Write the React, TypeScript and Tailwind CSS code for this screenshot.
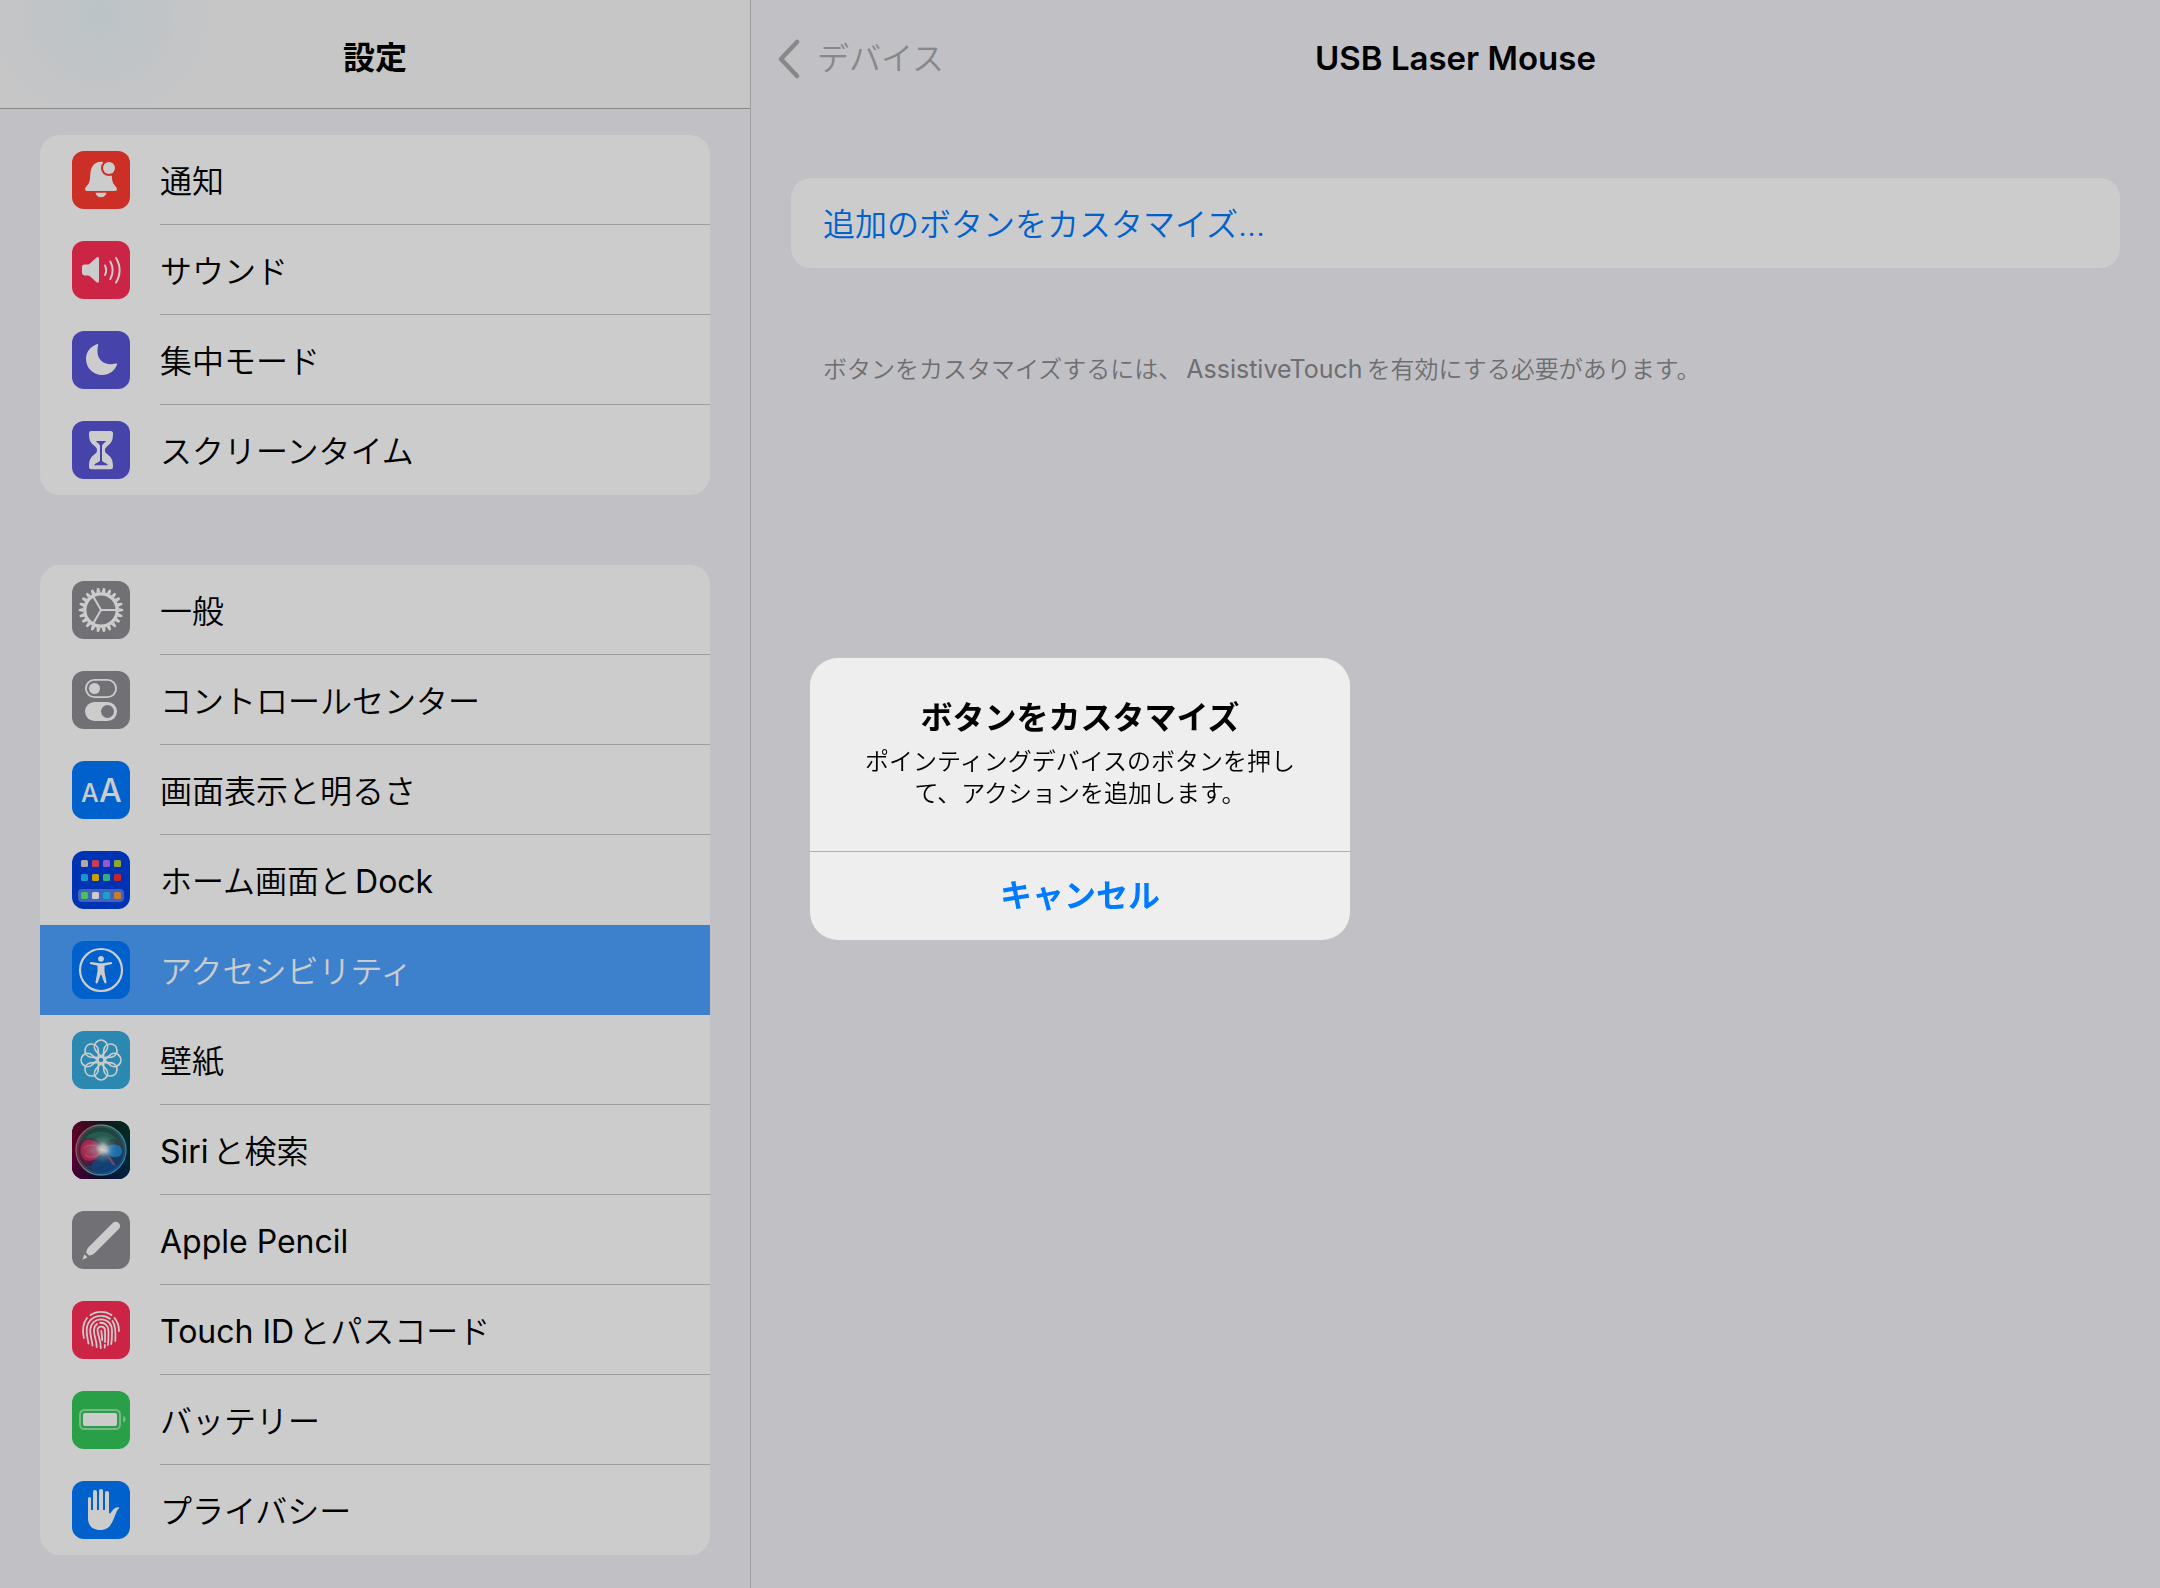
import type { ReactNode } from "react";

const FONT = "font-['Inter','Noto_Sans_CJK_JP',sans-serif]";

function Tile({ bg, children }: { bg: string; children: ReactNode }) {
  return (
    <svg viewBox="0 0 58 58" aria-hidden="true" className={`size-[58px] shrink-0 rounded-xl ${bg}`}>
      {children}
    </svg>
  );
}

function BellIcon() {
  return (
    <Tile bg="bg-[#ff3b30]">
      <path
        fill="#fff"
        d="M13 38c0-1 .8-2 2-3.300C17.500 32 18 29.500 18.200 25 18.500 17 21 11 29 10.700 37 11 39.500 17 39.800 25 40 29.500 40.500 32 43 34.700c1.200 1.300 2 2.300 2 3.300a2 2 0 0 1-2 2H15a2 2 0 0 1-2-2z"
      />
      <path fill="#fff" d="M23.500 41.700h11c-.5 2.800-2.700 4.600-5.500 4.600s-5-1.800-5.500-4.600z" />
      <circle cx="37" cy="17" r="8" fill="#ff3b30" />
      <circle cx="37" cy="17" r="6" fill="#fff" />
    </Tile>
  );
}

function SpeakerIcon() {
  return (
    <Tile bg="bg-[#ff2d55]">
      <path
        fill="#fff"
        d="M10 26q0-2.500 2.500-2.500h3.700q.8 0 1.500-.7l6.500-6q2.800-2 2.800 1V40q0 3-2.800 1l-6.500-6q-.7-.6-1.500-.6h-3.700Q10 34.400 10 32z"
      />
      <g fill="none" stroke="#fff" strokeWidth="2" strokeLinecap="round">
        <path d="M33 24.500c1.500 3 1.500 6.500 0 9.500" />
        <path d="M38.300 20.500c3 5.500 3 12 0 17.500" />
        <path d="M44 17c4.800 7.500 4.800 17 0 24.500" />
      </g>
    </Tile>
  );
}

function MoonIcon() {
  return (
    <Tile bg="bg-[#5856d6]">
      <path
        fill="#fff"
        d="M25 13.200c1-.4 1.400.2 1.100 1.300-1.400 5.500-.6 11.500 2.900 15 3.500 3.500 9 4.600 14.500 3.100 1.500-.5 1.900.2 1.500 1.200C42.500 40 37 44 30.500 44 21 44 14 37 14 27.800 14 21 18.500 15.300 25 13.200z"
      />
    </Tile>
  );
}

function HourglassIcon() {
  return (
    <Tile bg="bg-[#5856d6]">
      <path
        fill="#fff"
        d="M19.500 10h19q2.500 0 2.500 2.500C41 20 39 22 36 24.500c-2.500 2.100-3 3-3 4.700s.5 2.600 3 4.600c3 2.400 5 4.700 5 12q0 2.500-2.500 2.500h-19Q17 48.300 17 45.800c0-7.300 2-9.600 5-12 2.500-2 3-2.900 3-4.600s-.5-2.600-3-4.700C19 22 17 20 17 12.500 17 10 19.500 10 19.500 10z"
      />
      <path
        fill="#5856d6"
        d="M24 20h10c-.8 1.500-3.800 3-4 4.800V39.500c.5 2 5 2.300 6 4.800H22c1-2.500 5.500-2.800 6-4.800V24.800C27.800 23 24.800 21.500 24 20z"
      />
    </Tile>
  );
}

function GearIcon() {
  const teeth = Array.from({ length: 22 }, (_, i) => (i * 360) / 22);
  return (
    <Tile bg="bg-[#8e8e93]">
      {teeth.map((a) => (
        <path key={a} fill="#fff" d="M46.500 27l4.500.9q.6 1.100 0 2.200l-4.500.9z" transform={`rotate(${a} 29 29)`} />
      ))}
      <circle cx="29" cy="29" r="16.200" fill="none" stroke="#fff" strokeWidth="3.200" />
      {[0, 120, 240].map((a) => (
        <path key={a} d="M29 29H44" stroke="#fff" strokeWidth="2" transform={`rotate(${a} 29 29)`} />
      ))}
    </Tile>
  );
}

function TogglesIcon() {
  return (
    <Tile bg="bg-[#8e8e93]">
      <rect x="13.900" y="8.900" width="30.200" height="17.200" rx="8.600" fill="none" stroke="#fff" strokeWidth="1.800" />
      <circle cx="22.500" cy="17.500" r="5.500" fill="#fff" />
      <rect x="13" y="31" width="32" height="19" rx="9.500" fill="#fff" />
      <circle cx="35.500" cy="40.500" r="6.500" fill="#8e8e93" />
    </Tile>
  );
}

function TextSizeIcon() {
  return (
    <Tile bg="bg-[#007aff]">
      <text x="9" y="41" fontSize="25" fontWeight="500" fontFamily="Inter, sans-serif" fill="#fff">
        A
      </text>
      <text x="27" y="41" fontSize="32" fontWeight="500" fontFamily="Inter, sans-serif" fill="#fff">
        A
      </text>
    </Tile>
  );
}

const HOME_APPS = [
  { y: 9, colors: ["#dcd4ce", "#ff4b64", "#bb70ff", "#b5d432"] },
  { y: 23, colors: ["#19c2ff", "#ffc800", "#3edba2", "#fa322c"] },
  { y: 41, colors: ["#57f370", "#ffffff", "#19ceff", "#ff9c3e"] },
];

function HomeScreenIcon() {
  return (
    <Tile bg="bg-[#003fe1]">
      <rect x="6" y="38" width="46" height="13" rx="4" fill="#fff" fillOpacity=".32" />
      {HOME_APPS.map((row) =>
        row.colors.map((c, i) => <rect key={c} x={9 + i * 11} y={row.y} width="7" height="7" rx="1.500" fill={c} />),
      )}
    </Tile>
  );
}

function AccessibilityIcon() {
  return (
    <Tile bg="bg-[#007aff]">
      <circle cx="29" cy="29" r="21" fill="none" stroke="#fff" strokeWidth="2.200" />
      <circle cx="29" cy="17.800" r="2.900" fill="#fff" />
      <path
        fill="#fff"
        d="M19 21l7 1.100q3 .4 6 0l7-1.100q1.100 0 1.200 1 0 1-1 1.200l-6.200 1.300q-.5.200-.5.900v5l2 10.700q.1 1.300-.9 1.500-1 .1-1.400-1L29.500 34q-.5-1-1 0l-2.700 7.600q-.4 1.100-1.400 1-1-.2-.9-1.500l2-10.700v-5q0-.7-.5-.9l-6.200-1.300q-1-.2-1-1.200.1-1 1.200-1z"
      />
    </Tile>
  );
}

function FlowerIcon() {
  return (
    <Tile bg="bg-[#36aadc]">
      <g fill="none" stroke="#fff" strokeWidth="1.700" strokeLinejoin="round">
        <circle cx="29" cy="29" r="3.200" />
        {[0, 45, 90, 135, 180, 225, 270, 315].map((a) => (
          <path key={a} d="M29 25.600L23.600 19.500A6.600 6.600 0 1 1 34.400 19.500Z" transform={`rotate(${a} 29 29)`} />
        ))}
      </g>
    </Tile>
  );
}

function SiriIcon() {
  return (
    <Tile bg="bg-[#0a1020]">
      <defs>
        <linearGradient id="siri-top" x1="0" x2="1">
          <stop offset="0" stopColor="#7a0030" />
          <stop offset=".5" stopColor="#1a1a24" />
          <stop offset="1" stopColor="#00382c" />
        </linearGradient>
        <linearGradient id="siri-bottom" x1="0" x2="1">
          <stop offset="0" stopColor="#5a0048" />
          <stop offset=".5" stopColor="#14103c" />
          <stop offset="1" stopColor="#003058" />
        </linearGradient>
        <linearGradient id="siri-fade" x1="0" y1="0" x2="0" y2="1">
          <stop offset=".3" stopColor="#000" />
          <stop offset="1" stopColor="#fff" />
        </linearGradient>
        <mask id="siri-mask">
          <rect width="58" height="58" fill="url(#siri-fade)" />
        </mask>
        <linearGradient id="siri-orb" x1=".3" y1="0" x2=".6" y2="1">
          <stop offset="0" stopColor="#1d6a54" />
          <stop offset=".5" stopColor="#46606c" />
          <stop offset="1" stopColor="#0c4c9c" />
        </linearGradient>
        <linearGradient id="siri-ring" x1="0" y1=".3" x2="1" y2=".7">
          <stop offset="0" stopColor="#d8587c" />
          <stop offset=".45" stopColor="#6cb09c" />
          <stop offset="1" stopColor="#2ca4e8" />
        </linearGradient>
        <radialGradient id="siri-pink">
          <stop offset="0" stopColor="#e8709c" stopOpacity=".8" />
          <stop offset="1" stopColor="#e0285c" stopOpacity=".85" />
        </radialGradient>
        <radialGradient id="siri-glow">
          <stop offset="0" stopColor="#fff" />
          <stop offset=".25" stopColor="#fff" stopOpacity=".8" />
          <stop offset=".55" stopColor="#c8f4f0" stopOpacity=".3" />
          <stop offset="1" stopColor="#a0e8e0" stopOpacity="0" />
        </radialGradient>
      </defs>
      <rect width="58" height="58" fill="url(#siri-top)" />
      <rect width="58" height="58" fill="url(#siri-bottom)" mask="url(#siri-mask)" />
      <circle cx="29" cy="29" r="25" fill="url(#siri-orb)" fillOpacity=".75" />
      <path d="M5 26C12 12 26 26 31 29 24 36 20 50 10 44 5 40 3 32 5 26z" fill="#6c1844" fillOpacity=".7" />
      <path d="M31 29c-9 4-13 12-10 22 8 4 20 2 26-6-8-2-13-8-16-16z" fill="#1468c8" fillOpacity=".35" />
      <path d="M9 25c4-11 16-7 22 3.500C26 41 14 43 10 36c-1.800-3.500-2-7-1-11z" fill="url(#siri-pink)" />
      <path d="M12 27c4-4 12-4 19 2-5 7-13 9-18 5" fill="none" stroke="#ff9cc0" strokeWidth=".7" strokeOpacity=".7" />
      <path d="M31 29c6-7 18-8 19 1 0 8-12 9-19-1z" fill="#2490e8" fillOpacity=".85" />
      <path d="M31 29c5 5 9 9 13 16l-4-2z" fill="#d070b0" fillOpacity=".6" />
      <path d="M14 17c6-8 22-10 31 2-8-3-12 2-14 9-3-8-9-12-17-11z" fill="#38c090" fillOpacity=".3" />
      <circle cx="31" cy="28" r="14" fill="url(#siri-glow)" />
      <ellipse cx="31" cy="29" rx="9" ry="3" fill="url(#siri-glow)" transform="rotate(16 31 29)" />
      <circle cx="29" cy="29" r="25" fill="none" stroke="url(#siri-ring)" strokeWidth="1.300" />
      <circle cx="29" cy="29" r="23.300" fill="none" stroke="url(#siri-ring)" strokeWidth=".5" strokeOpacity=".7" />
    </Tile>
  );
}

function PencilIcon() {
  return (
    <Tile bg="bg-[#8e8e93]">
      <path
        fill="#fff"
        d="M40.700 12a4.300 4.300 0 0 1 6.100 6.100L22.600 42.300q-1 1-2.400 1.400l-2.400.9q-.6.100-1-.3l-2.300-2.300q-.4-.4-.3-1l.9-2.400q.4-1.400 1.400-2.400z"
      />
      <path fill="#fff" d="M10.200 48.700l2.200-5.200q1.600 1.100 3 3.100z" />
    </Tile>
  );
}

function FingerprintIcon() {
  return (
    <Tile bg="bg-[#ff2d55]">
      <g fill="none" stroke="#fff" strokeWidth="1.800" strokeLinecap="round">
        <path d="M18.500 14C24.500 9.700 33.500 9.700 39.500 14" />
        <path d="M15 17C11 22 10 28 11.800 37" />
        <path d="M42.500 17C45.500 20.500 47 24.500 47 30" />
        <path d="M16.500 42.500C15.500 37 14.300 33 14.800 27.500 15.500 20 21.500 14.800 29 14.800c3.500 0 6.500 1 9 3" />
        <path d="M40.500 20C43.500 24 44 29 43.300 40" />
        <path d="M20.500 44.500C20 39 17.700 33 18.300 28 19 22 23.500 18.300 29 18.300 36 18.300 40 23.500 40 30c0 4.500 0 8.500-.8 13" />
        <path d="M24.700 46C24.700 39 21.300 33 22 28.500 22.400 25.800 23.300 24 25 22.900" />
        <path d="M28 21.800C33 21.300 36.500 25 36.500 30c0 5 0 9-.6 14" />
        <path d="M28.800 47C29 39 25.500 33 25.500 29.500 25.500 27.300 27 25.600 29.200 25.600S33 27.300 33 30c0 4 .2 8-.1 11" />
        <path d="M29.300 30C29.800 33 30 35 30.200 39" />
        <path d="M33 44L32.700 46.500" />
      </g>
    </Tile>
  );
}

function BatteryIcon() {
  return (
    <Tile bg="bg-[#34c759]">
      <rect x="8" y="19" width="40" height="19" rx="4.500" fill="none" stroke="#fff" strokeOpacity=".5" strokeWidth="2" />
      <rect x="11" y="22" width="34" height="13" rx="2" fill="#fff" />
      <path fill="#fff" fillOpacity=".5" d="M51 25c1.700.5 2.700 1.700 2.700 3.300S52.700 31.100 51 31.700z" />
    </Tile>
  );
}

function HandIcon() {
  return (
    <Tile bg="bg-[#007aff]">
      <g stroke="#fff" strokeLinecap="round">
        <path d="M17.500 17.500V36" strokeWidth="3" />
        <path d="M23 11V36" strokeWidth="4" />
        <path d="M29 10V36" strokeWidth="4" />
        <path d="M35 12V36" strokeWidth="4" />
      </g>
      <path
        fill="#fff"
        d="M16 29H37V31.500Q37.600 33.500 39 31.500C41 28 43.500 25.700 46.800 26.300 48 26.700 46 28 44.800 30.300 41.500 37 40 49 28.500 49 19 49 16 43 16 37z"
      />
    </Tile>
  );
}

type Row = { icon: ReactNode; label: ReactNode; selected?: boolean };

const GROUPS: { name: string; rows: Row[] }[] = [
  {
    name: "alerts",
    rows: [
      { icon: <BellIcon />, label: "通知" },
      { icon: <SpeakerIcon />, label: "サウンド" },
      { icon: <MoonIcon />, label: "集中モード" },
      { icon: <HourglassIcon />, label: "スクリーンタイム" },
    ],
  },
  {
    name: "system",
    rows: [
      { icon: <GearIcon />, label: "一般" },
      { icon: <TogglesIcon />, label: "コントロールセンター" },
      { icon: <TextSizeIcon />, label: "画面表示と明るさ" },
      {
        icon: <HomeScreenIcon />,
        label: (
          <>
            ホーム画面と<span className="ml-1 font-normal">Dock</span>
          </>
        ),
      },
      { icon: <AccessibilityIcon />, label: "アクセシビリティ", selected: true },
      { icon: <FlowerIcon />, label: "壁紙" },
      {
        icon: <SiriIcon />,
        label: (
          <>
            <span className="mr-1 font-normal">Siri</span>と検索
          </>
        ),
      },
      { icon: <PencilIcon />, label: <span className="font-normal">Apple Pencil</span> },
      {
        icon: <FingerprintIcon />,
        label: (
          <>
            <span className="mr-1 font-normal">Touch ID</span>とパスコード
          </>
        ),
      },
      { icon: <BatteryIcon />, label: "バッテリー" },
      { icon: <HandIcon />, label: "プライバシー" },
    ],
  },
];

function SettingsGroup({ rows }: { rows: Row[] }) {
  return (
    <ul className="overflow-hidden rounded-[20px] bg-white">
      {rows.map((row, i) => {
        const plain = row.selected || i === rows.length - 1 || rows[i + 1].selected;
        return (
          <li key={i}>
            <button
              type="button"
              aria-current={row.selected ? "page" : undefined}
              className={`flex h-[90px] w-full items-center gap-[30px] pl-8 text-left text-[32px] font-[350] ${
                row.selected ? "bg-[#4da2ff] text-white" : "text-black"
              }`}
            >
              {row.icon}
              <span
                className={`flex h-full flex-1 items-center border-b pt-1 ${plain ? "border-transparent" : "border-[#c6c6c8]"}`}
              >
                <span>{row.label}</span>
              </span>
            </button>
          </li>
        );
      })}
    </ul>
  );
}

function Sidebar() {
  return (
    <aside className="w-[751px] shrink-0 border-r border-[#c6c6c8]">
      <header className="flex h-[109px] items-center justify-center border-b border-[#aaaaaa] bg-[#f8f8f8] bg-[radial-gradient(ellipse_120px_110px_at_100px_15px,#ebf4f9,#f8f8f8)] pt-2">
        <h2 className="text-[32px] font-bold">設定</h2>
      </header>
      <nav aria-label="設定" className="flex flex-col gap-[70px] px-10 pt-[26px] pb-8">
        {GROUPS.map((g) => (
          <SettingsGroup key={g.name} rows={g.rows} />
        ))}
      </nav>
    </aside>
  );
}

function Detail() {
  return (
    <main className="flex-1">
      <header className="grid h-[109px] grid-cols-[1fr_auto_1fr] items-center px-6 pt-2">
        <button
          type="button"
          className="flex items-center gap-4 justify-self-start text-[32px] font-[350] text-[#aaaaaa]"
        >
          <svg viewBox="0 0 26 40" aria-hidden="true" className="h-10 w-[26px]">
            <path
              d="M22 3L6 20L22 37"
              fill="none"
              stroke="currentColor"
              strokeWidth="4.500"
              strokeLinecap="round"
              strokeLinejoin="round"
            />
          </svg>
          デバイス
        </button>
        <h1 className="text-[33px] font-semibold">USB Laser Mouse</h1>
      </header>
      <div className="px-10 pt-[69px]">
        <button
          type="button"
          className="flex h-[90px] w-full items-center rounded-[20px] bg-white px-8 pt-1 text-left text-[32px] font-[350] text-[#007aff]"
        >
          追加のボタンをカスタマイズ...
        </button>
        <p className="px-8 pt-[85px] text-[24px] leading-8 font-[350] text-[#8a8a8e]">
          ボタンをカスタマイズするには、<span className="mx-1 text-[25px] font-normal">AssistiveTouch</span>
          を有効にする必要があります。
        </p>
      </div>
    </main>
  );
}

function CustomizeDialog() {
  return (
    <div className="fixed inset-0 flex items-center justify-center bg-black/20 pt-2.5">
      <div
        role="alertdialog"
        aria-modal="true"
        aria-labelledby="dialog-title"
        aria-describedby="dialog-body"
        className="w-[540px] overflow-hidden rounded-[28px] bg-[#eeeeef] text-center"
      >
        <div className="px-10 pt-10 pb-[41px]">
          <h2 id="dialog-title" className="text-[32px] leading-10 font-bold">
            ボタンをカスタマイズ
          </h2>
          <p id="dialog-body" className="pt-2 text-[24px] leading-8 font-[350]">
            ポインティングデバイスのボタンを押し
            <br />
            て、アクションを追加します。
          </p>
        </div>
        <button type="button" className="h-[89px] w-full border-t border-[#b0b0b3] text-[32px] font-bold text-[#007aff]">
          キャンセル
        </button>
      </div>
    </div>
  );
}

export default function App() {
  return (
    <div lang="ja" className={`flex min-h-screen bg-[#f2f2f7] text-black ${FONT}`}>
      <Sidebar />
      <Detail />
      <CustomizeDialog />
    </div>
  );
}
